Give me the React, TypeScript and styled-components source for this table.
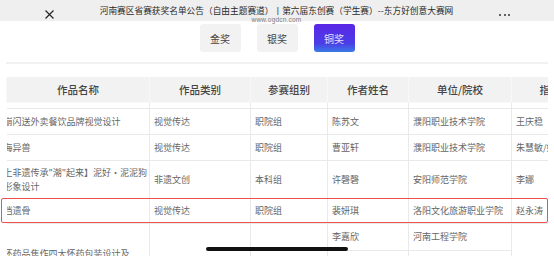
import styled, { createGlobalStyle } from 'styled-components';

const GlobalStyles = createGlobalStyle`
  html, body {
    margin: 0;
    padding: 0;
    background: #ffffff;
  }
  body {
    width: 554px;
    height: 256px;
    overflow: hidden;
    font-family: 'Noto Sans CJK SC', 'Noto Sans', sans-serif;
  }
`;

const Page = styled.div`
  position: relative;
  width: 554px;
  height: 256px;
  overflow: hidden;
  background: #fff;
`;

// Верхняя панель браузера
const TopBar = styled.div`
  display: flex;
  align-items: flex-start;
  height: 21px;
  padding: 0 43px 0 45px;
  background: #efefef;
`;

const CloseBtn = styled.div`
  width: 9px;
  height: 9px;
  margin-top: 10px;
  display: flex;
`;

const TitleBlock = styled.div`
  flex: 1;
  display: flex;
  flex-direction: column;
  align-items: center;
  padding-top: 5px;
`;

const Title = styled.div`
  font-size: 8.7px;
  line-height: 12px;
  color: #2a2a2a;
  white-space: nowrap;
`;

const Url = styled.div`
  font-family: 'Liberation Sans', 'Noto Sans', sans-serif;
  font-size: 6.5px;
  line-height: 6px;
  color: #7a7a7a;
  letter-spacing: 0.2px;
`;

const Dots = styled.div`
  display: flex;
  gap: 2.5px;
  margin-top: 14px;
  width: 12px;

  span {
    width: 2px;
    height: 2px;
    border-radius: 50%;
    background: #333;
  }
`;

// Вкладки наград
const Tabs = styled.div`
  display: flex;
  justify-content: center;
  gap: 16px;
  margin-top: 3px;
`;

const Tab = styled.div<{ $active?: boolean }>`
  width: 41px;
  height: 28px;
  border-radius: 3px;
  display: flex;
  align-items: center;
  justify-content: center;
  font-size: 10px;
  color: ${p => (p.$active ? '#e9e2ff' : '#444')};
  background: ${p => (p.$active ? 'linear-gradient(180deg, #5a25e6 0%, #4a3ee6 70%, #3a7be6 100%)' : '#f2f2f2')};
`;

const Divider = styled.div`
  height: 2px;
  margin: 10px 6px 0;
  background: #f1f1f1;
`;

const TableWrap = styled.div`
  margin: 13px 0 0 6px;
  width: 542px;
  overflow: hidden;
`;

const Table = styled.table`
  width: 603px;
  table-layout: fixed;
  border-collapse: collapse;
  font-size: 9px;
  color: #666;
`;

const Th = styled.th`
  height: 25px;
  padding: 0;
  background: #f2f2f2;
  border: 1px solid #f8f8f8;
  border-top: none;
  font-size: 10.5px;
  font-weight: 500;
  color: #444;
  text-align: center;
`;

const Row = styled.tr<{ $h: number }>`
  height: ${p => p.$h}px;
`;

const Td = styled.td<{ $top?: boolean }>`
  padding: 0 4px;
  border: 1px solid #e9e9e9;
  vertical-align: ${p => (p.$top ? 'top' : 'middle')};
  line-height: 14px;
  white-space: nowrap;
  overflow: hidden;
`;

const NameTd = styled(Td)`
  padding: 0;
  border-left: none;
  white-space: normal;
`;

const Clipped = styled.div<{ $pt?: number }>`
  margin-left: -3px;
  padding-top: ${p => p.$pt ?? 0}px;
  word-break: break-all;
`;

const EmptyTd = styled.td`
  padding: 0;
  border-left: 1px solid #e9e9e9;
  border-right: 1px solid #e9e9e9;
  border-bottom: 1px solid #e9e9e9;
`;

const Highlight = styled.div`
  position: absolute;
  left: 1px;
  top: 198px;
  width: 547px;
  height: 25px;
  box-sizing: border-box;
  border: 1.5px solid #f05050;
  border-radius: 2px;
  pointer-events: none;
`;

const HomeBar = styled.div`
  position: absolute;
  left: 206px;
  top: 247px;
  width: 142px;
  height: 4px;
  border-radius: 2px;
  background: #111;
`;

const CloseIcon = () => (
  <svg width="9" height="9" viewBox="0 0 9 9">
    <path d="M0.5 0.5 L8.5 8.5 M8.5 0.5 L0.5 8.5" stroke="#222" strokeWidth="1.1" fill="none" />
  </svg>
);

const cols = [143, 101, 77, 81, 103, 98];
const heads = ['作品名称', '作品类别', '参赛组别', '作者姓名', '单位/院校', '指导老师'];

type Item = { name: string; kind: string; group: string; author: string; school: string; teacher: string; h: number };

const rows: Item[] = [
  { name: '崩闪送外卖餐饮品牌视觉设计', kind: '视觉传达', group: '职院组', author: '陈苏文', school: '濮阳职业技术学院', teacher: '王庆稳', h: 26 },
  { name: '海异兽', kind: '视觉传达', group: '职院组', author: '曹亚轩', school: '濮阳职业技术学院', teacher: '朱慧敏/娟', h: 26 },
  { name: '上非遗传承"潮"起来】泥好·泥泥狗形象设计', kind: '非遗文创', group: '本科组', author: '许磬磬', school: '安阳师范学院', teacher: '李娜', h: 38 },
  { name: '档遗骨', kind: '视觉传达', group: '职院组', author: '裴妍琪', school: '洛阳文化旅游职业学院', teacher: '赵永涛', h: 25 },
];

const App = () => {
  return (
    <Page>
      <GlobalStyles />
      <TopBar>
        <CloseBtn>
          <CloseIcon />
        </CloseBtn>
        <TitleBlock>
          <Title>河南赛区省赛获奖名单公告（自由主题赛道）丨第六届东创赛（学生赛）--东方好创意大赛网</Title>
          <Url>www.ogdcn.com</Url>
        </TitleBlock>
        <Dots>
          <span />
          <span />
          <span />
        </Dots>
      </TopBar>

      <Tabs>
        <Tab>金奖</Tab>
        <Tab>银奖</Tab>
        <Tab $active>铜奖</Tab>
      </Tabs>

      <Divider />

      <TableWrap>
        <Table>
          <colgroup>
            {cols.map((w, i) => (
              <col key={i} style={{ width: w }} />
            ))}
          </colgroup>
          <thead>
            <tr>
              {heads.map(h => (
                <Th key={h}>{h}</Th>
              ))}
            </tr>
          </thead>
          <tbody>
            <Row $h={6}>
              <EmptyTd style={{ borderLeft: 'none' }} />
              <EmptyTd />
              <EmptyTd />
              <EmptyTd />
              <EmptyTd />
              <EmptyTd />
            </Row>
            {rows.map(r => (
              <Row $h={r.h} key={r.author}>
                <NameTd>
                  <Clipped>{r.name}</Clipped>
                </NameTd>
                <Td>{r.kind}</Td>
                <Td>{r.group}</Td>
                <Td>{r.author}</Td>
                <Td>{r.school}</Td>
                <Td>{r.teacher}</Td>
              </Row>
            ))}
            <Row $h={27}>
              <NameTd rowSpan={2} $top>
                <Clipped $pt={23}>
                  怀药品焦作四大怀药包装设计及
                  <br />
                  推广
                </Clipped>
              </NameTd>
              <Td rowSpan={2} />
              <Td rowSpan={2} />
              <Td>李嘉欣</Td>
              <Td>河南工程学院</Td>
              <Td rowSpan={2} />
            </Row>
            <Row $h={27}>
              <Td />
              <Td />
            </Row>
          </tbody>
        </Table>
      </TableWrap>

      <Highlight />
      <HomeBar />
    </Page>
  );
};

export default App;
